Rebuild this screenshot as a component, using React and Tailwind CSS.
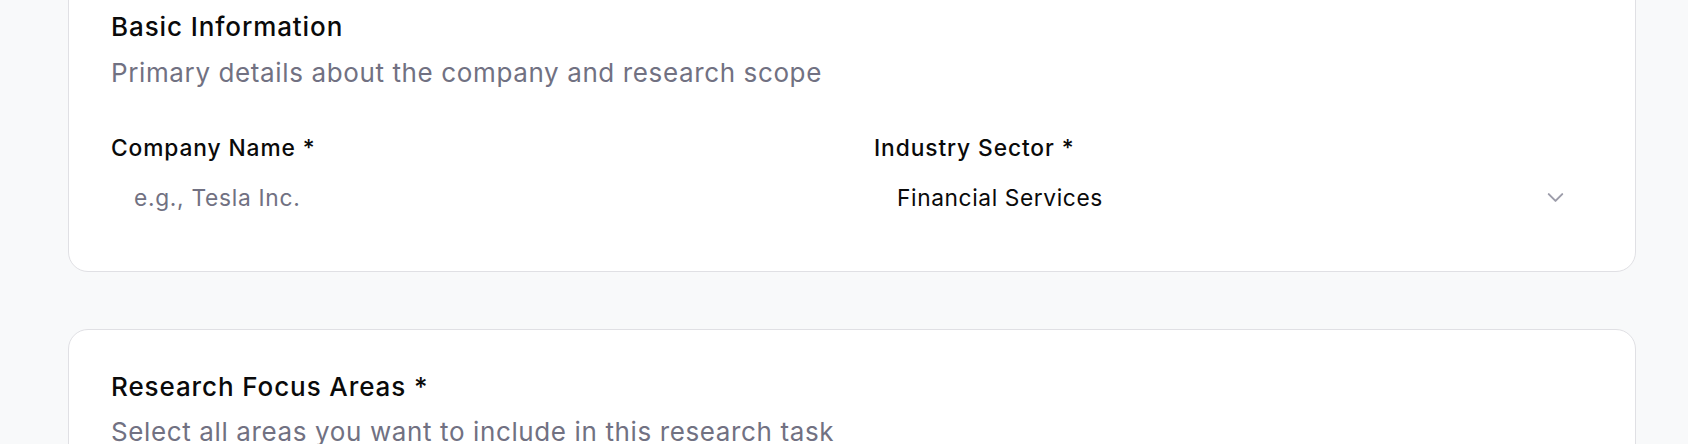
import React from "react";

function Chevron() {
  return (
    <svg width="27" height="27" viewBox="0 0 24 24" fill="none" stroke="#9d9daa" strokeWidth="1.8" strokeLinecap="round" strokeLinejoin="round">
      <path d="m6 9 6 6 6-6" />
    </svg>
  );
}

export default function App() {
  return (
    <div className="h-screen overflow-hidden bg-[#f8f9fa] pl-[68px] pr-[52px]" style={{ fontFamily: "Inter, 'Noto Sans', sans-serif" }}>
      <div className="-mt-[29px] flex flex-col gap-[57px]">
        <div className="rounded-[20px] border border-[#e0e0e4] bg-white px-[42px] pt-[42px] pb-[45px]">
          <div className="flex flex-col gap-[13px]">
            <h4 className="text-[26px] leading-none font-medium tracking-[0.9px] text-[#0a0a0a]">Basic Information</h4>
            <p className="text-[26px] leading-[39px] tracking-[0.62px] text-[#717182]">Primary details about the company and research scope</p>
          </div>
          <div className="mt-[45px] grid grid-cols-2 gap-x-[44px]">
            <div className="flex flex-col gap-[10px]">
              <label className="text-[22.75px] leading-none font-medium tracking-[0.9px] text-[#0a0a0a]">Company Name *</label>
              <input
                className="h-[56px] w-full bg-white px-[23px] text-[22.75px] tracking-[0.7px] text-[#0a0a0a] outline-none placeholder:text-[#717182]"
                placeholder="e.g., Tesla Inc."
              />
            </div>
            <div className="flex flex-col gap-[10px]">
              <label className="text-[22.75px] leading-none font-medium tracking-[0.9px] text-[#0a0a0a]">Industry Sector *</label>
              <button className="flex h-[56px] w-full items-center justify-between bg-white pl-[23px] pr-[24px] text-[22.75px] tracking-[0.6px] text-[#0a0a0a]">
                <span>Financial Services</span>
                <Chevron />
              </button>
            </div>
          </div>
        </div>
        <div className="rounded-[20px] border border-[#e0e0e4] bg-white px-[42px] pt-[44px] pb-[42px]">
          <div className="flex flex-col gap-[12px]">
            <h4 className="text-[26px] leading-none font-medium tracking-[0.9px] text-[#0a0a0a]">Research Focus Areas *</h4>
            <p className="text-[26px] leading-[39px] tracking-[0.62px] text-[#717182]">Select all areas you want to include in this research task</p>
          </div>
          <div className="mt-[44px] h-[200px]" />
        </div>
      </div>
    </div>
  );
}
